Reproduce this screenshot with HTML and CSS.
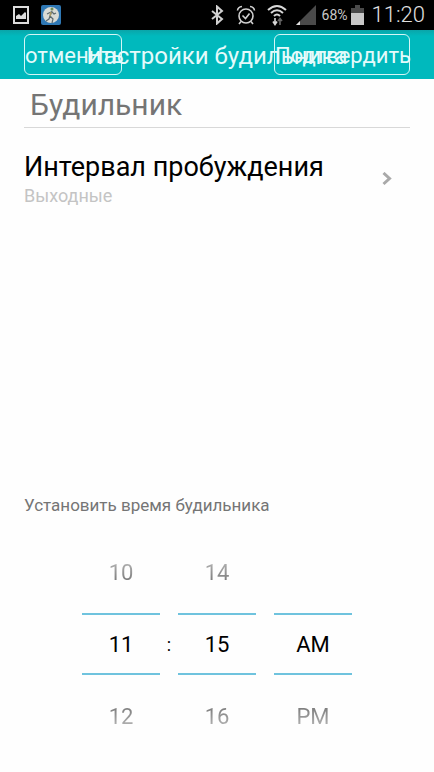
FILE: index.html
```html
<!DOCTYPE html>
<html lang="ru">
<head>
<meta charset="UTF-8">
<meta name="viewport" content="width=device-width, initial-scale=1.0">
<title>Настройки будильника</title>
<link rel="stylesheet" href="styles.css">
</head>
<body>
<div class="screen">

  <div class="status-bar">
    <div class="status-left">
      <svg width="16" height="18" viewBox="0 0 16 18">
        <rect x="1" y="1" width="14" height="16" fill="none" stroke="#dcdcdc" stroke-width="2"/>
        <path d="M3 13V10L6 8L8 10L12 6L13 7V13Z" fill="#dcdcdc"/>
      </svg>
      <svg width="20" height="20" viewBox="0 0 20 20">
        <rect width="20" height="20" rx="2" fill="#2f78b4"/>
        <circle cx="10" cy="10" r="8" fill="#d9dbd5"/>
        <circle cx="11" cy="4" r="1.500" fill="#6f8d55"/>
        <path d="M11 6L9 11L12 14L11 18M9 11L8 14L5 16M10 7L6 9M11 7L13 9L15 8" fill="none" stroke="#5c6a70" stroke-width="1.200"/>
        <path d="M10 7L9 11" stroke="#a99a62" stroke-width="1.600"/>
      </svg>
    </div>
    <div class="status-right">
      <svg width="14" height="20" viewBox="0 0 14 20">
        <path d="M2 6L12 14L7 18.500V1.500L12 6L2 14" fill="none" stroke="#d0d0d0" stroke-width="2"/>
      </svg>
      <svg class="icon-alarm" width="20" height="20" viewBox="0 0 20 20">
        <circle cx="10" cy="11" r="7" fill="none" stroke="#d0d0d0" stroke-width="1.600"/>
        <path d="M6.500 10.500L9.500 13.500L13.500 8.500" fill="none" stroke="#d0d0d0" stroke-width="1.600"/>
        <path d="M1.500 5.500Q2 2 6 1.500M18.500 5.500Q18 2 14 1.500M5 16.500L3 19M15 16.500L17 19" fill="none" stroke="#d0d0d0" stroke-width="1.600"/>
      </svg>
      <svg class="icon-wifi" width="20" height="22" viewBox="0 0 20 22">
        <path d="M1 6Q10 -2 19 6M4 9Q10 3.500 16 9M7 12Q10 9 13 12" fill="none" stroke="#d8d8d8" stroke-width="2"/>
        <path d="M8 14V20M6 17.500L8 20.500L10 17.500" fill="none" stroke="#d8d8d8" stroke-width="1.600"/>
        <path d="M13 21V15M11 17L13 14.500L15 17" fill="none" stroke="#666" stroke-width="1.600"/>
      </svg>
      <svg class="icon-signal" width="20" height="20" viewBox="0 0 20 20">
        <path d="M0 20L20 0V20Z" fill="#4a4a4a"/>
        <path d="M0 20L4 16V20Z" fill="#e0e0e0"/>
      </svg>
      <span class="battery-level">68%</span>
      <svg class="icon-battery" width="13" height="20" viewBox="0 0 13 20">
        <path d="M0 3H4V0H9V3H13V8H0Z" fill="#4a4a4a"/>
        <rect y="8" width="13" height="12" fill="#c8c8c8"/>
      </svg>
      <span class="clock">11:20</span>
    </div>
  </div>

  <header class="header">
    <button class="btn btn-cancel" type="button">отменить</button>
    <h1>Настройки будильника</h1>
    <button class="btn btn-confirm" type="button">Подтвердить</button>
  </header>

  <main class="content">
    <input class="alarm-name" type="text" value="Будильник" aria-label="Название">

    <a class="option" href="#interval">
      <span class="option-text">
        <span class="option-title">Интервал пробуждения</span>
        <span class="option-sub">Выходные</span>
      </span>
      <svg class="option-arrow" width="10" height="14" viewBox="0 0 10 14">
        <path d="M1.500 1L7.500 6.500L1.500 12" fill="none" stroke="#a9a9a9" stroke-width="3"/>
      </svg>
    </a>

    <section class="time">
      <h2>Установить время будильника</h2>
      <div class="picker">
        <div class="picker-col">
          <button class="picker-step step-prev" type="button">10</button>
          <input class="picker-value" type="text" value="11" aria-label="Часы">
          <button class="picker-step step-next" type="button">12</button>
        </div>
        <span class="picker-colon">:</span>
        <div class="picker-col">
          <button class="picker-step step-prev" type="button">14</button>
          <input class="picker-value" type="text" value="15" aria-label="Минуты">
          <button class="picker-step step-next" type="button">16</button>
        </div>
        <span class="picker-colon"></span>
        <div class="picker-col">
          <div class="picker-step"></div>
          <input class="picker-value" type="text" value="AM" aria-label="AM или PM">
          <button class="picker-step step-next" type="button">PM</button>
        </div>
      </div>
    </section>
  </main>

</div>
</body>
</html>
```

FILE: styles.css
```css
:root {
  --teal: #00b9bd;
  --line: #6fc3de;
  --text: #000;
  --grey: #757575;
  --light: #c4c4c4;
}

* { margin: 0; padding: 0; box-sizing: border-box; }

body {
  background: #fefefe;
  color: var(--text);
  font-family: Roboto, sans-serif;
}

button, input {
  font: inherit;
  color: inherit;
  background: none;
  border: none;
  border-radius: 0;
}

svg { display: block; flex-shrink: 0; }

.screen {
  min-height: 100vh;
  display: flex;
  flex-direction: column;
}

/* Status bar */
.status-bar {
  height: 30px;
  background: #000;
  display: flex;
  align-items: center;
  justify-content: space-between;
  padding: 0 9px 0 13px;
}

.status-left,
.status-right {
  display: flex;
  align-items: center;
}

.status-left { gap: 12px; }

.icon-alarm { margin-left: 12px; }
.icon-wifi { margin-left: 11px; }
.icon-signal { margin-left: 9px; }

.battery-level {
  margin-left: 6px;
  font-size: 14px;
  color: #c8c8c8;
}

.icon-battery { margin-left: 3px; }

.clock {
  margin-left: 8px;
  font-size: 22px;
  font-weight: 300;
  line-height: 30px;
  color: #e0e0e0;
}

/* Header: title and buttons share one cell */
.header {
  display: grid;
  align-items: center;
  height: 49px;
  padding: 0 24px;
  background: linear-gradient(#0aa5a9, var(--teal) 6px);
  color: #e4fbfb;
}

.header > * { grid-area: 1 / 1; }

h1 {
  justify-self: center;
  padding-top: 2px;
  font-size: 24px;
  font-weight: 400;
  white-space: nowrap;
}

.btn {
  height: 41px;
  padding-top: 2px;
  border: 1px solid #d5f6f6;
  border-radius: 6px;
  font-size: 22px;
  white-space: nowrap;
}

.btn-cancel { justify-self: start; width: 98px; }
.btn-confirm { justify-self: end; width: 136px; }

/* Content */
.content {
  flex: 1;
  display: flex;
  flex-direction: column;
  padding: 0 24px 35px;
}

.alarm-name {
  width: 100%;
  height: 49px;
  padding: 2px 6px 0;
  border-bottom: 1px solid #d8d8d8;
  font-size: 30px;
  color: var(--grey);
}

.option {
  display: flex;
  align-items: center;
  justify-content: space-between;
  margin-top: 22px;
  padding-right: 18px;
  color: inherit;
  text-decoration: none;
}

.option-title,
.option-sub {
  display: block;
}

.option-title {
  font-size: 27px;
  line-height: 34px;
}

.option-sub {
  font-size: 18px;
  line-height: 24px;
  color: var(--light);
}

/* Time picker */
.time { margin-top: auto; }

h2 {
  margin-bottom: 35px;
  font-size: 17px;
  font-weight: 400;
  line-height: 22px;
  color: var(--grey);
}

.picker {
  display: flex;
  align-items: center;
  justify-content: center;
  font-size: 22px;
}

.picker-col {
  display: flex;
  flex-direction: column;
  gap: 20px;
  width: 78px;
}

.picker-step { height: 42px; }

.step-prev,
.step-next {
  color: transparent;
  background-clip: text;
}

.step-prev { background-image: linear-gradient(#b4b4b4 25%, #777 75%); }
.step-next { background-image: linear-gradient(#777 25%, #b4b4b4 75%); }

.picker-value {
  width: 100%;
  height: 62px;
  border-top: 2px solid var(--line);
  border-bottom: 2px solid var(--line);
  text-align: center;
}

.picker-colon {
  width: 18px;
  text-align: center;
  font-size: 18px;
}
```
